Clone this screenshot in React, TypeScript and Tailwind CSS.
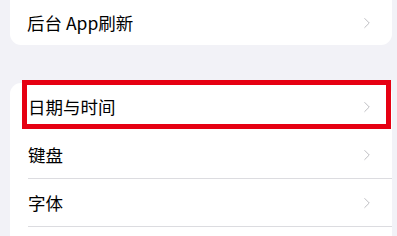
import { ChevronRight } from 'lucide-react';

const font = { fontFamily: '"Noto Sans CJK SC", "Noto Sans", sans-serif' };

function Row({ label, divider = true }: { label: string; divider?: boolean }) {
  return (
    <div className="flex h-[48px] items-center pl-[28px]">
      <div
        className={
          divider
            ? 'flex h-full flex-1 items-center border-b border-[#dcdce0] pr-[16px]'
            : 'flex h-full flex-1 items-center pr-[16px]'
        }
      >
        <span className="flex-1 text-[17.5px] leading-none text-black">{label}</span>
        <ChevronRight className="h-[18px] w-[18px] text-[#bcbcc0]" strokeWidth={1.3} />
      </div>
    </div>
  );
}

export default function App() {
  return (
    <div className="relative h-[236px] w-[397px] overflow-hidden bg-[#f2f2f7]" style={font}>
      <div className="ml-[10px] mr-[5px] -mt-[10px] rounded-[11px] bg-white">
        <div className="flex h-[55px] items-center pl-[17px] pr-[16px] pt-[10px]">
          <span className="flex-1 text-[17.5px] leading-none text-black">后台 App刷新</span>
          <ChevronRight className="h-[18px] w-[18px] text-[#bcbcc0]" strokeWidth={1.3} />
        </div>
      </div>

      <div className="ml-[10px] mr-[5px] mt-[38px] h-[160px] rounded-t-[11px] bg-white">
        <div className="-ml-[10px]">
          <Row label="日期与时间" divider={false} />
          <Row label="键盘" />
          <Row label="字体" />
        </div>
      </div>

      <div className="absolute left-[22px] top-[80px] h-[49px] w-[369px] border-[5px] border-[#e60012]" />
    </div>
  );
}
